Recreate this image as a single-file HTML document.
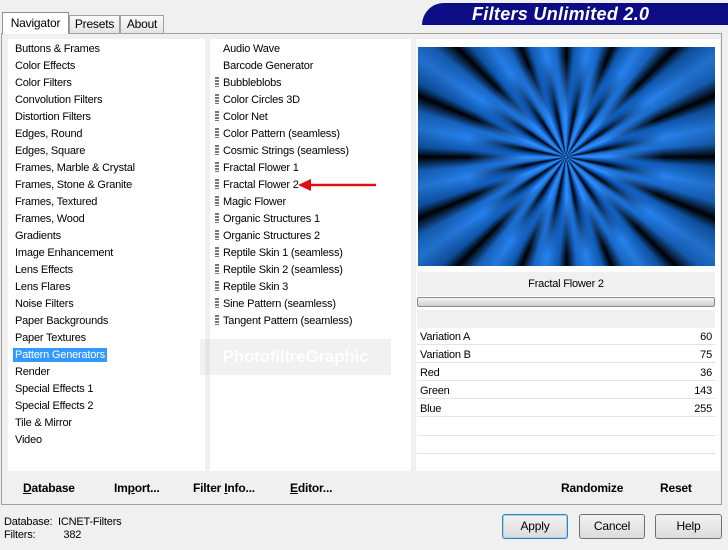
<!DOCTYPE html>
<html><head><meta charset="utf-8"><style>
*{margin:0;padding:0;box-sizing:border-box}
body{width:728px;height:550px;background:#f0f0f0;font-family:"Liberation Sans",sans-serif;font-size:11px;letter-spacing:-0.2px;color:#000;position:relative;overflow:hidden}
.a{position:absolute}
.tab{position:absolute;border:1px solid #a0a0a0;border-bottom:none;background:linear-gradient(#fafafa,#e4e4e4);text-align:center;font-size:12px}
.list{position:absolute;background:#fff}
.list div{height:17px;line-height:17px;white-space:nowrap}
.ic{display:inline-block;width:4px;height:10px;margin-right:4px;vertical-align:-1px;background:repeating-linear-gradient(#6a7a88 0 2px,#fff 2px 3px)}
.row{position:absolute;left:417px;width:298px;height:17px;line-height:18px;background:#fff;border-bottom:1px solid #e4e4e4;padding:0 3px}
.row span{float:right}
.btn{position:absolute;top:514px;height:25px;width:66px;border:1px solid #707070;border-radius:3px;background:linear-gradient(#f2f2f2,#dcdcdc);text-align:center;line-height:23px;font-size:12px}
.bb{position:absolute;font-weight:bold;font-size:12px;top:481px}
</style></head><body>
<div class="a" style="left:422px;top:3px;width:306px;height:22px;background:#0c0c84;border-radius:22px 0 0 0"></div>
<div class="a" style="left:472px;top:4px;color:#fff;font-weight:bold;font-style:italic;font-size:18px;letter-spacing:.3px">Filters Unlimited 2.0</div>
<div class="a" style="left:1px;top:33px;width:721px;height:472px;border:1px solid #a0a0a0;background:#f0f0f0"></div>
<div class="tab" style="left:69px;top:15px;width:51px;height:18px;line-height:17px">Presets</div>
<div class="tab" style="left:120px;top:15px;width:44px;height:18px;line-height:17px">About</div>
<div class="tab" style="left:2px;top:12px;width:67px;height:22px;line-height:20px;background:#fff;border-color:#909090">Navigator</div>
<div class="list" style="left:8px;top:39px;width:197px;height:432px;padding:2px 0 0 7px">
<div>Buttons &amp; Frames</div><div>Color Effects</div><div>Color Filters</div><div>Convolution Filters</div><div>Distortion Filters</div><div>Edges, Round</div><div>Edges, Square</div><div>Frames, Marble &amp; Crystal</div><div>Frames, Stone &amp; Granite</div><div>Frames, Textured</div><div>Frames, Wood</div><div>Gradients</div><div>Image Enhancement</div><div>Lens Effects</div><div>Lens Flares</div><div>Noise Filters</div><div>Paper Backgrounds</div><div>Paper Textures</div><div><span style="background:#3399ff;color:#fff;padding:1px 2px;margin-left:-2px">Pattern Generators</span></div><div>Render</div><div>Special Effects 1</div><div>Special Effects 2</div><div>Tile &amp; Mirror</div><div>Video</div>
</div>
<div class="list" style="left:210px;top:39px;width:201px;height:432px;padding:2px 0 0 5px">
<div style="padding-left:8px">Audio Wave</div><div style="padding-left:8px">Barcode Generator</div>
<div><i class="ic"></i>Bubbleblobs</div><div><i class="ic"></i>Color Circles 3D</div><div><i class="ic"></i>Color Net</div><div><i class="ic"></i>Color Pattern (seamless)</div><div><i class="ic"></i>Cosmic Strings (seamless)</div><div><i class="ic"></i>Fractal Flower 1</div><div><i class="ic"></i>Fractal Flower 2</div><div><i class="ic"></i>Magic Flower</div><div><i class="ic"></i>Organic Structures 1</div><div><i class="ic"></i>Organic Structures 2</div><div><i class="ic"></i>Reptile Skin 1 (seamless)</div><div><i class="ic"></i>Reptile Skin 2 (seamless)</div><div><i class="ic"></i>Reptile Skin 3</div><div><i class="ic"></i>Sine Pattern (seamless)</div><div><i class="ic"></i>Tangent Pattern (seamless)</div>
</div>
<svg class="a" style="left:298px;top:177px" width="80" height="16"><line x1="10" y1="8" x2="78" y2="8" stroke="#e01010" stroke-width="2.5"/><polygon points="0,8 13,2 13,14" fill="#e01010"/></svg>
<div class="a" style="left:200px;top:339px;width:191px;height:36px;background:rgba(210,210,210,.3);color:rgba(255,255,255,.9);font-weight:bold;font-size:17px;line-height:36px;text-align:center">PhotofiltreGraphic</div>
<div class="a" style="left:416px;top:39px;width:304px;height:432px;background:#fff"></div>
<div class="a" style="left:418px;top:47px;width:297px;height:219px;overflow:hidden;background:#1a80e8">
<div class="a" style="left:-60px;top:-100px;width:417px;height:420px;background:repeating-conic-gradient(from 0deg at 50% 50%,#000 0deg,#1060c0 4deg,#2a8cff 11deg,#1a70d8 17deg,#000 22.5deg)"></div>
<div class="a" style="left:48px;top:10px;width:200px;height:200px;background:repeating-conic-gradient(from 11deg at 50% 50%,#000 0deg,#1a70d8 5deg,#3090ff 11deg,#0a50b0 17deg,#000 22.5deg);border-radius:50%;-webkit-mask-image:radial-gradient(circle,#000 30%,transparent 70%);mask-image:radial-gradient(circle,#000 30%,transparent 70%)"></div>
<div class="a" style="left:0;top:0;width:297px;height:219px;background:radial-gradient(circle at 50% 50%,rgba(0,0,0,0) 40%,rgba(0,0,0,.2) 80%)"></div>
</div>
<div class="a" style="left:417px;top:272px;width:298px;height:24px;background:#f0f0f0;text-align:center;line-height:25px">Fractal Flower 2</div>
<div class="a" style="left:417px;top:297px;width:298px;height:10px;border:1px solid #8a8a8a;border-radius:2px;background:linear-gradient(#f4f4f4,#cfcfcf)"></div>
<div class="a" style="left:417px;top:310px;width:298px;height:18px;background:#f0f0f0"></div>
<div class="row" style="top:328px">Variation A<span>60</span></div>
<div class="row" style="top:346px">Variation B<span>75</span></div>
<div class="row" style="top:364px">Red<span>36</span></div>
<div class="row" style="top:382px">Green<span>143</span></div>
<div class="row" style="top:400px">Blue<span>255</span></div>
<div class="a" style="left:417px;top:435px;width:298px;height:1px;background:#e4e4e4"></div>
<div class="a" style="left:417px;top:453px;width:298px;height:1px;background:#e4e4e4"></div>
<div class="a" style="left:8px;top:471px;width:403px;height:30px;background:#f0f0f0"></div>
<div class="a" style="left:417px;top:471px;width:303px;height:30px;background:#f0f0f0"></div>
<div class="bb" style="left:23px"><u>D</u>atabase</div>
<div class="bb" style="left:114px">Im<u>p</u>ort...</div>
<div class="bb" style="left:193px">Filter <u>I</u>nfo...</div>
<div class="bb" style="left:290px"><u>E</u>ditor...</div>
<div class="bb" style="left:561px">Randomize</div>
<div class="bb" style="left:660px">Reset</div>
<div class="a" style="left:4px;top:516px;line-height:13px">Database:&nbsp; ICNET-Filters<br>Filters:<span style="display:inline-block;width:28px"></span>382</div>
<div class="btn" style="left:502px;border-color:#3c7fb1;box-shadow:inset 0 0 0 1px #9ad7f5">Apply</div>
<div class="btn" style="left:579px">Cancel</div>
<div class="btn" style="left:655px;width:67px">Help</div>
</body></html>
